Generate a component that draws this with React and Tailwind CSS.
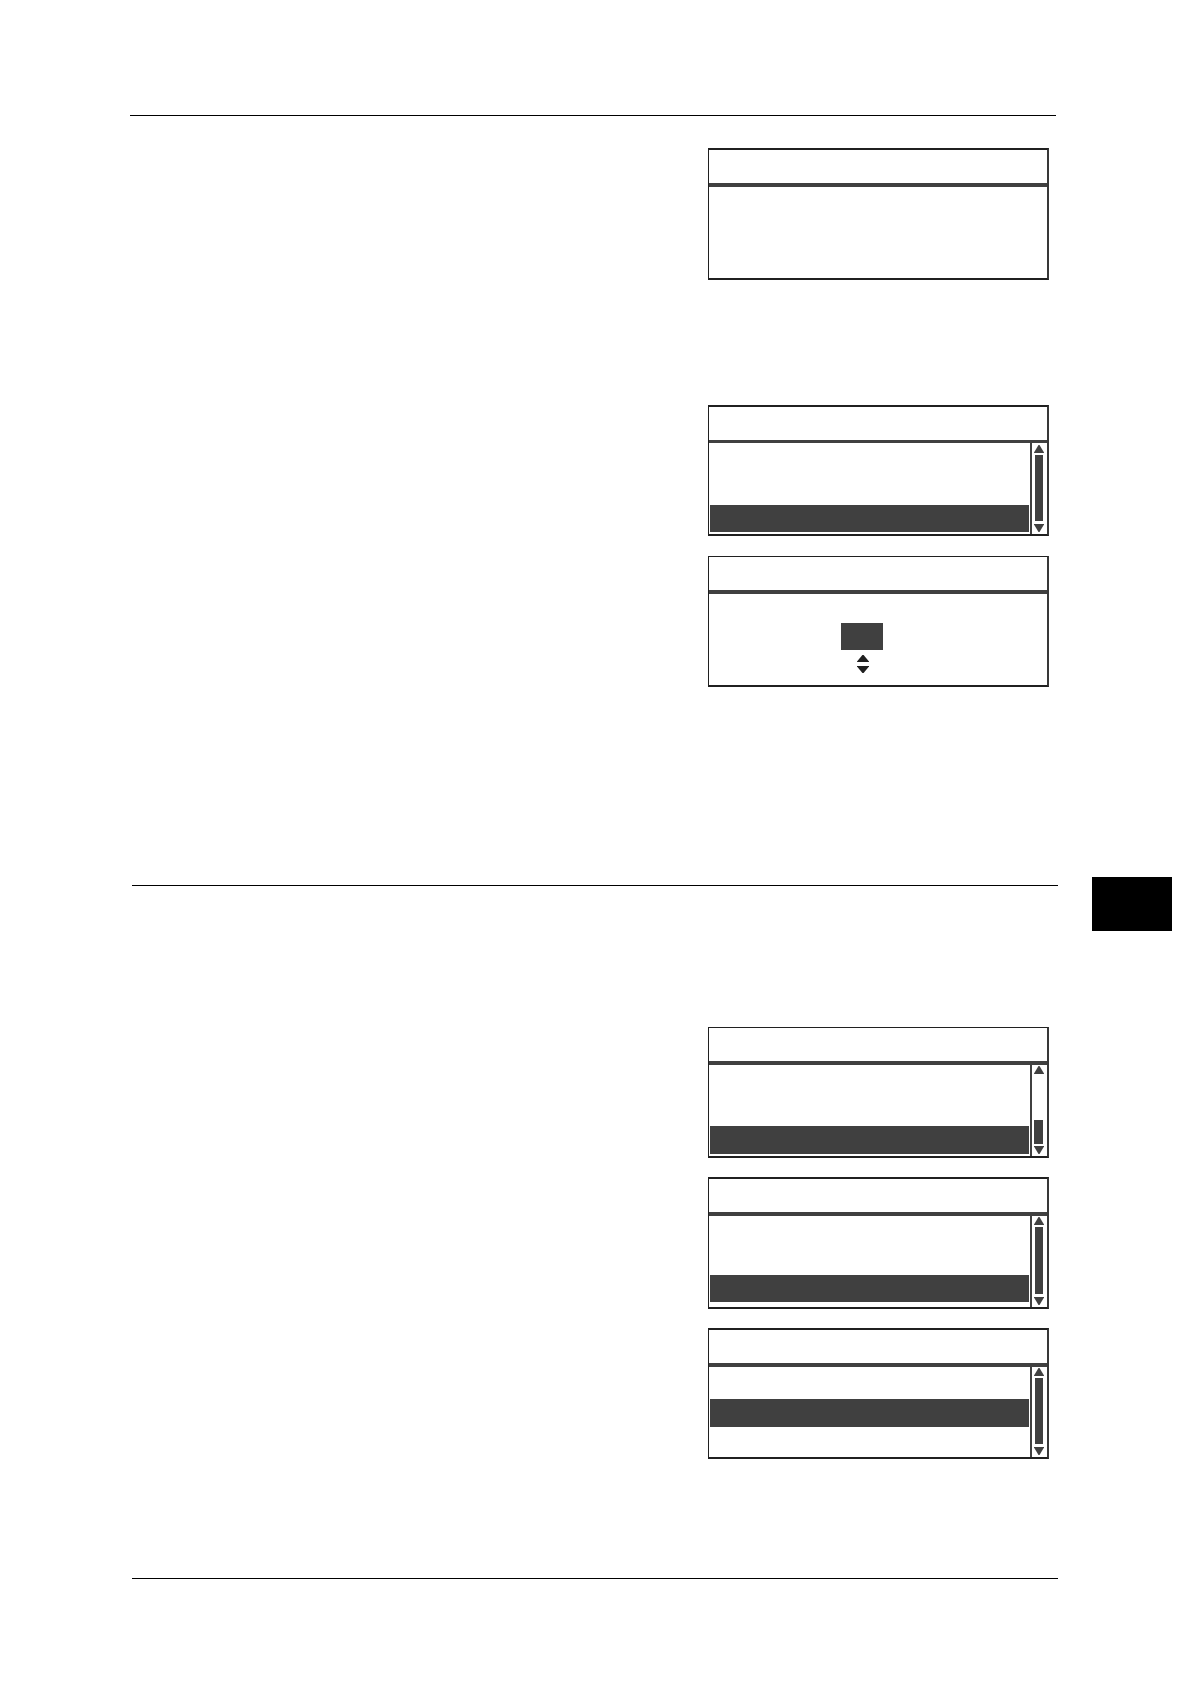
function Triangle({ down = false, className }) {
  return (
    <svg viewBox="0 0 10 8" preserveAspectRatio="none" className={className} aria-hidden="true">
      <path d={down ? "M-0.3 0H10.3L5.5 8H4.5Z" : "M-0.3 8H10.3L5.5 0H4.5Z"} fill="currentColor" />
    </svg>
  );
}

function Screen({ thinTop = false, thinRule = false, short = false, children }) {
  return (
    <section
      className={`mr-[141px] flex w-[341px] flex-col self-end border-r-2 border-b-2 border-l border-[#202020] border-r-[#383838] ${thinTop ? "border-t" : "border-t-2"}`}
    >
      <header className="h-[33px]" />
      <div className={`bg-[#404040] ${thinRule ? "h-[3px]" : "h-1"}`} />
      <div className={`flex ${short ? "h-[90px]" : "h-[91px]"}`}>{children}</div>
    </section>
  );
}

function Scrollbar({ atEnd = false, className = "pt-px" }) {
  return (
    <div
      className={`flex w-[17px] flex-col items-center border-l-2 border-[#404040] pr-px pb-0.5 text-[#404040] ${className}`}
    >
      <button type="button" aria-label="Scroll up">
        <Triangle className="block h-2 w-2.5" />
      </button>
      <div className={`flex w-2.5 flex-1 flex-col ${atEnd ? "mb-0.5 items-start justify-end" : "mt-0.5 mb-[3px] items-center"}`}>
        <div className={`bg-[#404040] ${atEnd ? "h-6 w-[9px]" : "w-2 flex-1"}`} />
      </div>
      <button type="button" aria-label="Scroll down">
        <Triangle down className="block h-2 w-2.5" />
      </button>
    </div>
  );
}

function Menu({ offset, rowHeight }) {
  return (
    <div className={`flex-1 px-px ${offset}`}>
      <div className={`bg-[#404040] ${rowHeight}`} />
    </div>
  );
}

export default function App() {
  return (
    <main className="flex min-h-screen flex-col bg-white pt-[115px] pb-[105px] font-['Liberation_Sans',sans-serif]">
      <hr className="mr-[134px] mb-8 ml-[130px] h-px border-0 bg-black" />

      <Screen />

      <div className="mt-[125px] flex flex-col gap-5">
        <Screen thinRule>
          <Menu offset="pt-[62px]" rowHeight="h-[27px]" />
          <Scrollbar className="pt-0.5" />
        </Screen>
        <Screen thinTop>
          <div className="flex flex-1 flex-col items-center pt-[29px] pr-[33px]">
            <div className="h-[27px] w-[42px] bg-[#404040]" />
            <div className="mt-[5px] flex flex-col gap-1 pl-0.5 text-[#202020]">
              <button type="button" aria-label="Increase">
                <Triangle className="block h-[7px] w-3" />
              </button>
              <button type="button" aria-label="Decrease">
                <Triangle down className="block h-[7px] w-3" />
              </button>
            </div>
          </div>
        </Screen>
      </div>

      <div className="mt-[190px] mr-[18px] ml-[132px] flex items-start gap-[34px]">
        <hr className="mt-2 h-px flex-1 border-0 bg-black" />
        <aside className="h-[54px] w-20 bg-black" />
      </div>

      <div className="mt-24 flex flex-col gap-[19px]">
        <Screen thinTop>
          <Menu offset="pt-[61px]" rowHeight="h-7" />
          <Scrollbar atEnd />
        </Screen>
        <Screen>
          <Menu offset="pt-[59px]" rowHeight="h-[27px]" />
          <Scrollbar />
        </Screen>
        <Screen short>
          <Menu offset="pt-8" rowHeight="h-7" />
          <Scrollbar />
        </Screen>
      </div>

      <hr className="mx-[132px] mt-[119px] h-px border-0 bg-black" />
    </main>
  );
}
